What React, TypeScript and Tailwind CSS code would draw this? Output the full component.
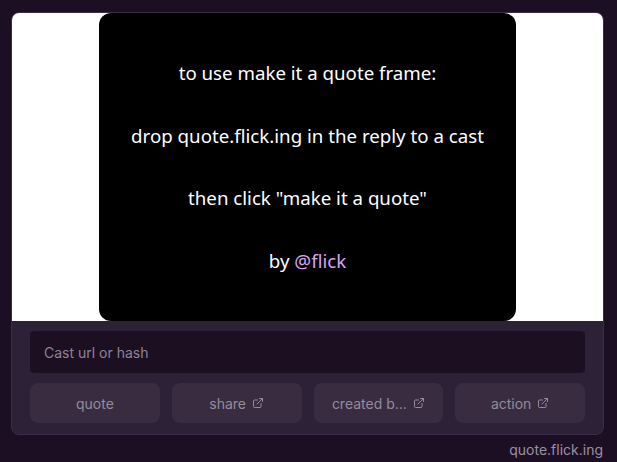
import { ExternalLink } from "lucide-react";

const lines = [
  "to use make it a quote frame:",
  "drop quote.flick.ing in the reply to a cast",
  'then click "make it a quote"',
];

const buttons = [
  { label: "quote", link: false },
  { label: "share", link: true },
  { label: "created b...", link: true },
  { label: "action", link: true },
];

function FrameImage() {
  return (
    <div className="flex h-[308px] w-[417px] flex-col items-center justify-center gap-[38.5px] rounded-xl bg-black text-[18.7px] text-white font-['Noto_Sans','Open_Sans',sans-serif]">
      {lines.map((l) => (
        <p key={l} className="leading-[24px]">
          {l}
        </p>
      ))}
      <p className="leading-[24px]">
        by <span className="text-[#d9a6f4]">@flick</span>
      </p>
    </div>
  );
}

export default function App() {
  return (
    <main className="flex h-[462px] w-[617px] flex-col bg-[#1c0f24] px-[11px] pt-[12px] font-['Inter',sans-serif]">
      <div className="w-[593px] overflow-hidden rounded-lg border border-[#3a2c46] bg-[#2c2137]">
        <div className="flex justify-center bg-white">
          <FrameImage />
        </div>
        <div className="flex flex-col gap-[10px] px-[18px] pb-[11px] pt-[10px]">
          <div className="flex h-[42px] items-center rounded bg-[#1c0f22] px-[14px] text-[14px] text-[#8d8496]">
            Cast url or hash
          </div>
          <div className="grid grid-cols-4 gap-[12px]">
            {buttons.map((b) => (
              <button
                key={b.label}
                className="flex h-[40px] items-center justify-center gap-[6px] rounded-lg bg-[#392c41] text-[14px] text-[#958b9c]"
              >
                {b.label}
                {b.link ? <ExternalLink size={12} strokeWidth={2} /> : null}
              </button>
            ))}
          </div>
        </div>
      </div>
      <div className="w-[593px] pr-[1px] pt-[4px] text-right text-[14px] text-[#9a90a2]">quote.flick.ing</div>
    </main>
  );
}
